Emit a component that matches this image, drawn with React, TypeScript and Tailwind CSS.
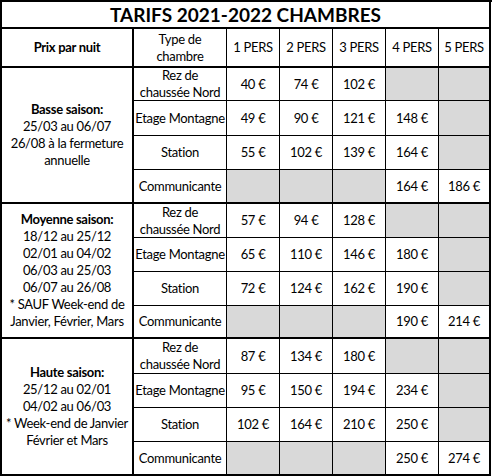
import React from "react";

type Section = {
  title: string;
  lines: string[];
  rows: { name: React.ReactNode; prices: (number | null)[] }[];
};

const rezDe = (
  <>
    Rez de
    <br />
    chaussée Nord
  </>
);

const sections: Section[] = [
  {
    title: "Basse saison:",
    lines: ["25/03 au 06/07", "26/08 à la fermeture", "annuelle"],
    rows: [
      { name: rezDe, prices: [40, 74, 102, null, null] },
      { name: "Etage Montagne", prices: [49, 90, 121, 148, null] },
      { name: "Station", prices: [55, 102, 139, 164, null] },
      { name: "Communicante", prices: [null, null, null, 164, 186] },
    ],
  },
  {
    title: "Moyenne saison:",
    lines: [
      "18/12 au 25/12",
      "02/01 au 04/02",
      "06/03 au 25/03",
      "06/07 au 26/08",
      "* SAUF Week-end de",
      "Janvier, Février, Mars",
    ],
    rows: [
      { name: rezDe, prices: [57, 94, 128, null, null] },
      { name: "Etage Montagne", prices: [65, 110, 146, 180, null] },
      { name: "Station", prices: [72, 124, 162, 190, null] },
      { name: "Communicante", prices: [null, null, null, 190, 214] },
    ],
  },
  {
    title: "Haute saison:",
    lines: ["25/12 au 02/01", "04/02 au 06/03", "* Week-end de Janvier", "Février et Mars"],
    rows: [
      { name: rezDe, prices: [87, 134, 180, null, null] },
      { name: "Etage Montagne", prices: [95, 150, 194, 234, null] },
      { name: "Station", prices: [102, 164, 210, 250, null] },
      { name: "Communicante", prices: [null, null, null, 250, 274] },
    ],
  },
];

const headers = ["1 PERS", "2 PERS", "3 PERS", "4 PERS", "5 PERS"];

function PriceCell({ value, last, lastCol }: { value: number | null; last: boolean; lastCol: boolean }) {
  const border = last
    ? lastCol
      ? "border-r-2 border-b-2"
      : "border-r border-b-2"
    : lastCol
      ? "border-r-2 border-b"
      : "border-r border-b";
  return (
    <div
      className={`flex items-center justify-center border-black ${border} ${
        value === null ? "bg-[#d9d9d9]" : "bg-white"
      }`}
    >
      {value !== null && `${value} €`}
    </div>
  );
}

export default function App() {
  return (
    <div
      className="grid w-[492px] grid-cols-[132px_93px_53px_53px_53px_53px_52px] grid-rows-[27px_39px_33px_35px_34px_34px_34px_34px_34px_33px_35px_34px_34px_34px] whitespace-nowrap border-l-2 border-t-2 border-black bg-white text-[13px] leading-[17px] tracking-[-0.3px] text-black"
      style={{ fontFamily: "Lato, 'Liberation Sans', sans-serif" }}
    >
      <div className="col-span-7 flex items-center justify-center border-b-2 border-r-2 border-black text-[19px] font-bold tracking-normal">
        TARIFS 2021-2022 CHAMBRES
      </div>

      <div className="flex items-center justify-center border-b-2 border-r-2 border-black font-bold">
        Prix par nuit
      </div>
      <div className="flex items-center justify-center border-b-2 border-r border-black text-center">
        Type de
        <br />
        chambre
      </div>
      {headers.map((h, i) => (
        <div
          key={h}
          className={`flex items-center justify-center border-b-2 border-black ${
            i === headers.length - 1 ? "border-r-2" : "border-r"
          }`}
        >
          {h}
        </div>
      ))}

      {sections.map((s) => (
        <React.Fragment key={s.title}>
          <div className="row-span-4 flex flex-col items-center justify-center border-b-2 border-r-2 border-black text-center">
            <span className="font-bold">{s.title}</span>
            {s.lines.map((l) => (
              <span key={l}>{l}</span>
            ))}
          </div>
          {s.rows.map((r, ri) => {
            const last = ri === s.rows.length - 1;
            return (
              <React.Fragment key={ri}>
                <div
                  className={`flex items-center justify-center border-r border-black text-center ${
                    last ? "border-b-2" : "border-b"
                  }`}
                >
                  {r.name}
                </div>
                {r.prices.map((p, pi) => (
                  <PriceCell key={pi} value={p} last={last} lastCol={pi === r.prices.length - 1} />
                ))}
              </React.Fragment>
            );
          })}
        </React.Fragment>
      ))}
    </div>
  );
}
